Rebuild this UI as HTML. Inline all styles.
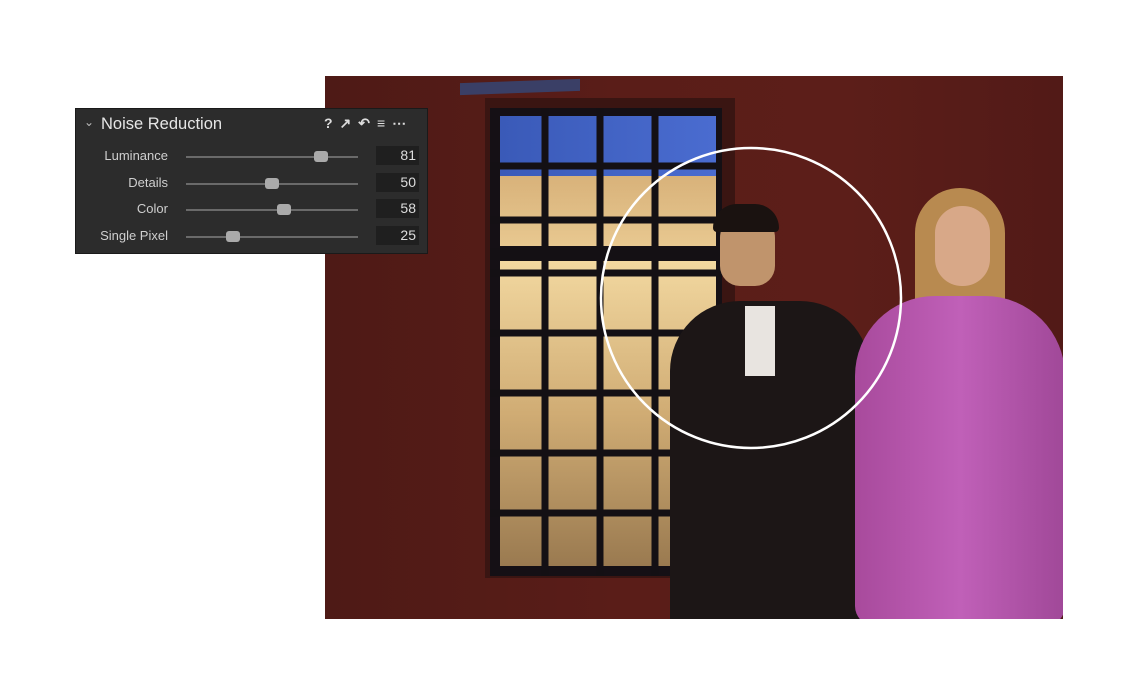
<!DOCTYPE html>
<html><head><style>
body{margin:0;width:1140px;height:698px;background:#fff;position:relative;overflow:hidden;font-family:"Liberation Sans",sans-serif}
.a{position:absolute}
#photo{left:325px;top:76px;width:738px;height:543px;background:linear-gradient(90deg,#4e1a16,#5a1d18 40%,#5c1e19 70%,#521a17);overflow:hidden}
#panel{left:75px;top:108px;width:353px;height:146px;background:#2c2c2c;border:1px solid #1a1a1a;box-sizing:border-box;color:#ddd}
.lbl{font-size:13px;color:#cfcfcf;text-align:right;width:92px;left:0}
.trk{left:110px;width:172px;height:2px;background:#6a6a6a}
.knob{width:14px;height:11px;background:#aaa;border-radius:3px}
.val{left:300px;width:43px;height:19px;background:#1f1f1f;font-size:14px;color:#ddd;text-align:right;line-height:19px;box-sizing:border-box;padding-right:3px}
</style></head><body>
<div id="photo" class="a">
  <div class="a" style="left:135px;top:5px;width:120px;height:12px;background:#3a3f66;transform:skewY(-2deg)"></div>
  <div class="a" style="left:160px;top:22px;width:250px;height:480px;background:#3a1512"></div>
  <div class="a" style="left:165px;top:32px;width:232px;height:468px;background:#151015"></div>
  <div class="a" style="left:175px;top:40px;width:216px;height:70px;background:linear-gradient(90deg,#3a5ab8,#4a6cd0)"></div>
  <div class="a" style="left:175px;top:100px;width:216px;height:70px;background:linear-gradient(180deg,#d8b27a,#e8c890)"></div>
  <div class="a" style="left:175px;top:185px;width:216px;height:305px;background:linear-gradient(180deg,#f2d8a0,#d0ac74 50%,#9a7a50)"></div>
  <svg class="a" style="left:165px;top:32px" width="232" height="468">
    <g stroke="#141014" stroke-width="7" fill="none">
      <line x1="55" y1="0" x2="55" y2="468"/><line x1="110" y1="0" x2="110" y2="468"/><line x1="165" y1="0" x2="165" y2="468"/>
      <line x1="0" y1="58" x2="232" y2="58"/><line x1="0" y1="112" x2="232" y2="112"/><line x1="0" y1="165" x2="232" y2="165"/>
      <line x1="0" y1="225" x2="232" y2="225"/><line x1="0" y1="285" x2="232" y2="285"/><line x1="0" y1="345" x2="232" y2="345"/><line x1="0" y1="405" x2="232" y2="405"/>
    </g>
    <rect x="0" y="140" width="232" height="12" fill="#141014"/>
  </svg>
  <div class="a" style="left:395px;top:135px;width:55px;height:75px;background:#c0946c;border-radius:27px 27px 20px 20px"></div>
  <div class="a" style="left:388px;top:128px;width:66px;height:28px;background:#1a1210;border-radius:30px 30px 5px 5px"></div>
  <div class="a" style="left:345px;top:225px;width:200px;height:330px;background:#1c1616;border-radius:70px 70px 0 0"></div>
  <div class="a" style="left:420px;top:230px;width:30px;height:70px;background:#e8e4e0"></div>
  <div class="a" style="left:590px;top:112px;width:90px;height:150px;background:#b88a50;border-radius:45px 45px 20px 20px"></div>
  <div class="a" style="left:610px;top:130px;width:55px;height:80px;background:#d8a888;border-radius:27px"></div>
  <div class="a" style="left:530px;top:220px;width:210px;height:330px;background:linear-gradient(90deg,#a84a9c,#c060b8 50%,#a04898);border-radius:80px 80px 20px 20px"></div>
  <svg class="a" style="left:0;top:0" width="738" height="543"><circle cx="426" cy="222" r="150" fill="none" stroke="#fff" stroke-width="2.5"/></svg>
</div>
<div id="panel" class="a">
  <div class="a" style="left:8px;top:6px;font-size:12px;color:#bbb">&#8964;</div>
  <div class="a" style="left:25px;top:6px;font-size:16.5px;color:#e6e6e6">Noise Reduction</div>
  <div class="a" style="left:248px;top:6px;font-size:14px;color:#ddd;letter-spacing:7px;font-weight:bold">?↗↶≡⋯</div>
  <div class="a lbl" style="top:39px">Luminance</div><div class="a trk" style="top:47px"></div><div class="a knob" style="left:238px;top:42px"></div><div class="a val" style="top:37px">81</div>
  <div class="a lbl" style="top:66px">Details</div><div class="a trk" style="top:74px"></div><div class="a knob" style="left:189px;top:69px"></div><div class="a val" style="top:64px">50</div>
  <div class="a lbl" style="top:92px">Color</div><div class="a trk" style="top:100px"></div><div class="a knob" style="left:201px;top:95px"></div><div class="a val" style="top:90px">58</div>
  <div class="a lbl" style="top:119px">Single Pixel</div><div class="a trk" style="top:127px"></div><div class="a knob" style="left:150px;top:122px"></div><div class="a val" style="top:117px">25</div>
</div>
</body></html>
